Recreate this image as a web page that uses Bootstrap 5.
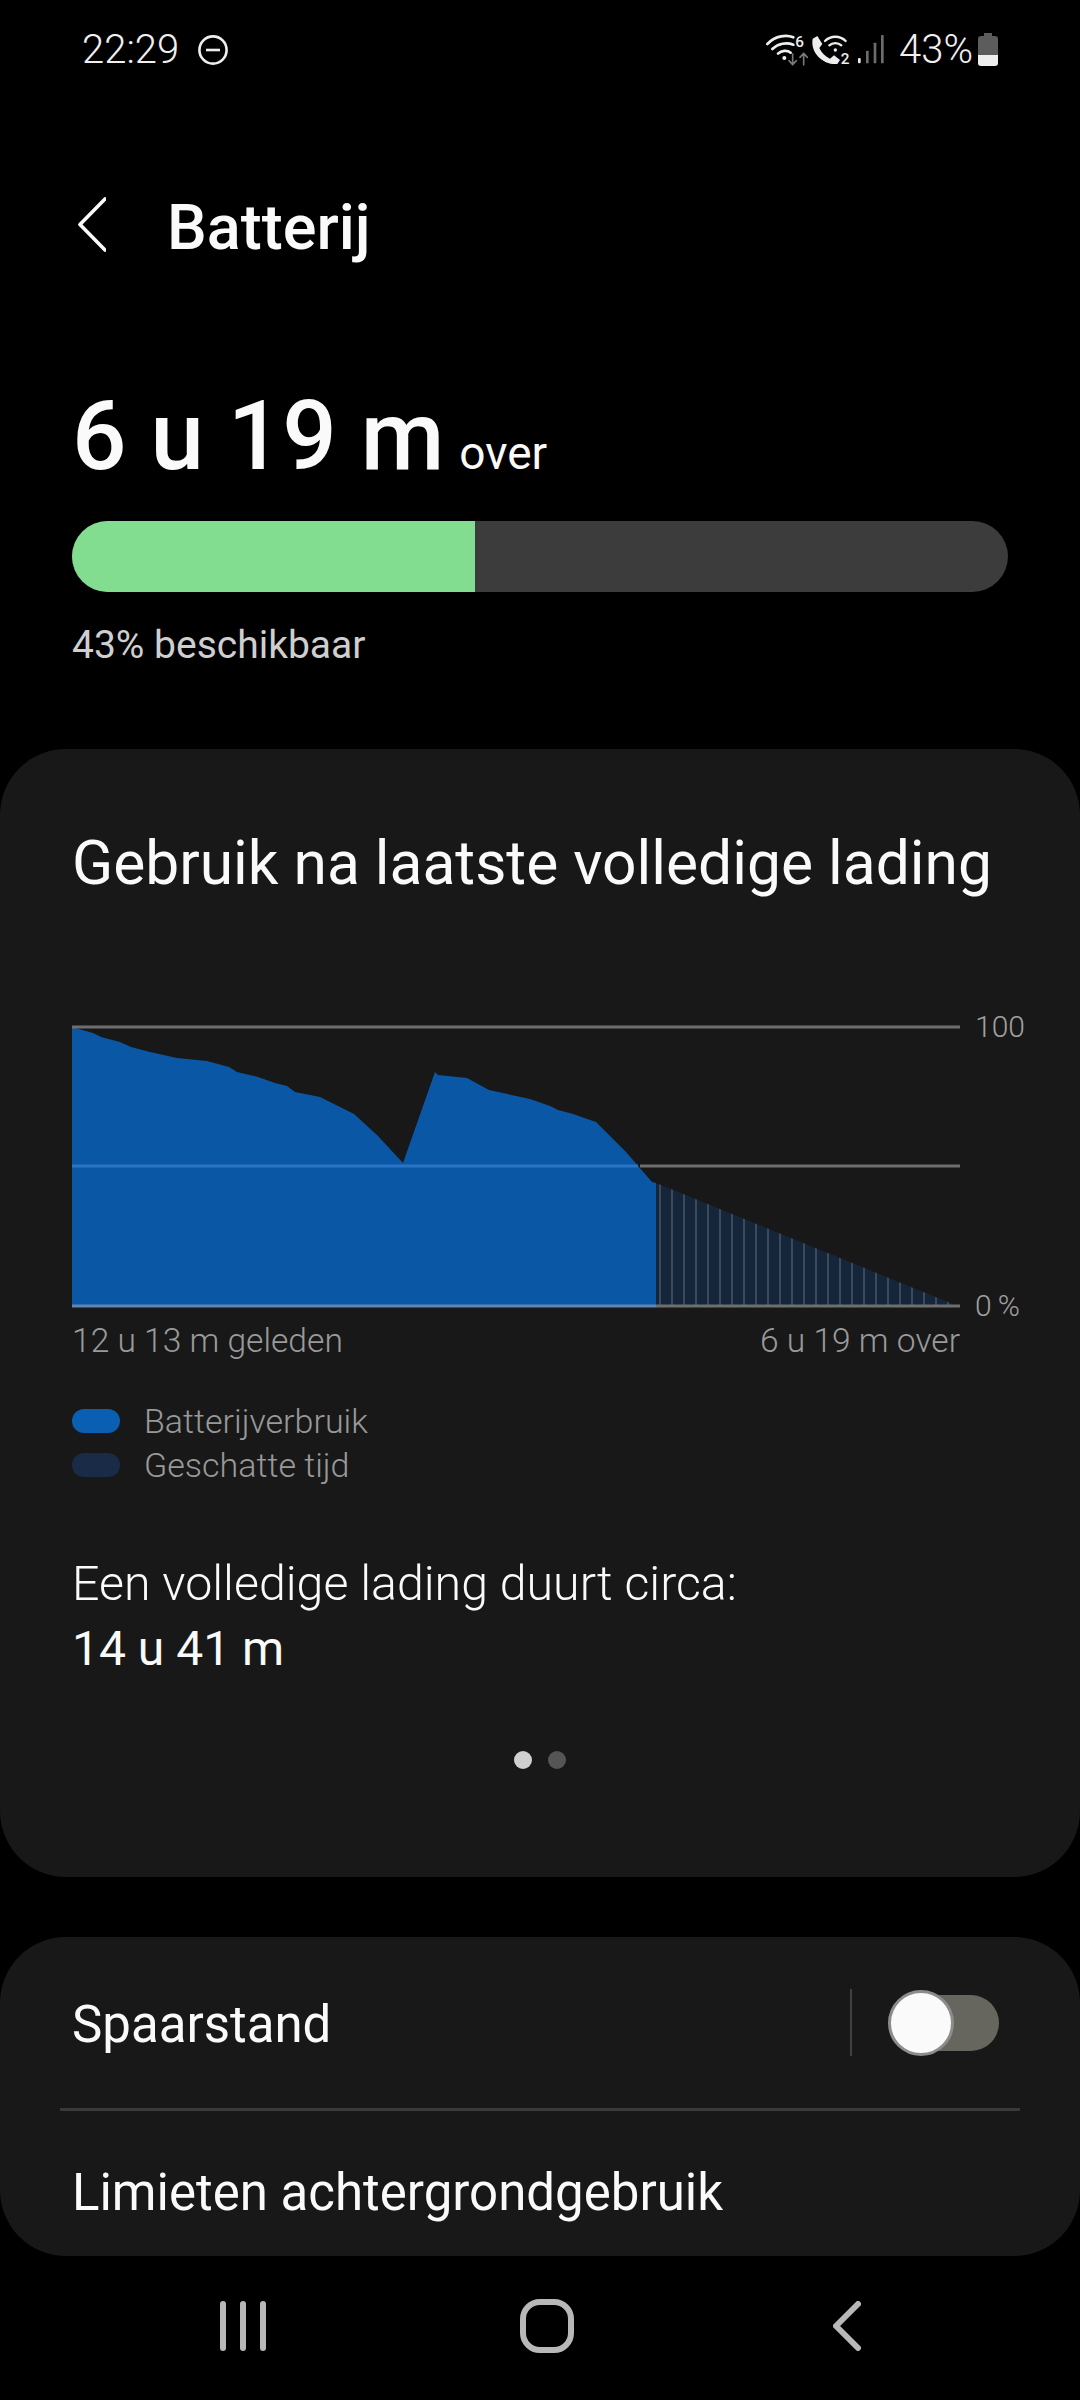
<!DOCTYPE html>
<html lang="nl">
<head>
<meta charset="utf-8">
<title>Batterij</title>
<link href="https://cdn.jsdelivr.net/npm/bootstrap@5.3.0/dist/css/bootstrap.min.css" rel="stylesheet">
<style>
html,body{background:#000;margin:0}
body{width:1080px;height:2400px;overflow:hidden;font-family:Roboto,"Liberation Sans",sans-serif;color:#fafafa}
.stat-bar{height:100px;padding:0 0 0 82px}
.stat-time{font-size:40px;font-weight:300;line-height:50px;color:#f0f0f0;width:115px}
.stat-pct{font-size:40px;font-weight:300;line-height:50px;color:#f0f0f0}
.app-bar{height:250px;padding:5px 0 0 78px}
.app-chevron{margin-top:-5px}
.app-title{font-size:63px;font-weight:500;line-height:70px;margin:0 0 0 61px;color:#fafafa}
.hero{padding:0 72px}
.hero-time{font-size:96px;font-weight:500;line-height:100px;margin-top:36px}
.hero-over{font-size:46px;font-weight:400;margin-left:15px}
.hero-bar{height:71px;margin-top:18px;background:#3c3c3c;border-radius:36px;overflow:hidden}
.hero-fill{width:403px;background:#82dd90}
.hero-note{font-size:39px;font-weight:400;line-height:50px;margin-top:28px;color:#cfcfcf}
.panel{background:#181818;border-radius:66px}
.panel-main{margin-top:79px;padding:80px 0 107px 72px;height:1128px}
.panel-title{font-size:60.500px;font-weight:400;line-height:70px;margin:0}
.chart-wrap{margin-top:126px}
.chart-svg{display:block;width:888px;height:283px}
.axis{margin-left:15px;height:283px;font-size:30px;font-weight:300;color:#a0a0a0}
.axis span{line-height:34px;margin:-15px 0}
.x-labels{width:888px;margin-top:13px;font-size:33.600px;font-weight:300;line-height:40px;color:#9a9a9a}
.legend{margin-top:38px;font-size:34px;font-weight:300;line-height:44px;color:#999}
.swatch{width:48px;height:24px;border-radius:12px;margin-right:24px}
.swatch-a{background:#0b5fb3}
.swatch-b{background:#1a2b47}
.full-time{margin-top:64px;font-size:48.300px;line-height:65px;font-weight:300}
.full-val{font-weight:400;font-size:48px;line-height:65px}
.pager{margin:70px 0 0 -72px}
.pager i{width:18px;height:18px;border-radius:50%;background:#555;display:block}
.pager i.on{background:#d0d0d0}
.panel-list{margin-top:60px;height:319px}
.row-a{height:171px;padding:0 81px 0 72px;font-size:51px;font-weight:400}
.row-a .lbl{flex:1 1 auto;padding-top:6px}
.sep{width:2px;height:67px;background:#404040;margin-right:36px}
.toggle{width:111px;height:66px;position:relative}
.toggle-track{position:absolute;left:5px;right:0;top:5px;height:56px;background:#66665e;border-radius:28px}
.toggle-knob{position:absolute;left:0;top:0;width:66px;height:66px;border-radius:50%;background:#fafafa;border:3px solid #8c8c8c}
.rule{height:3px;background:#3a3a3a;margin:0 60px}
.row-b{padding:52px 0 0 72px;font-size:51px;line-height:60px}
.nav-bottom{height:140px;padding:0 219px 0 220px}
.nav-home{margin-left:-6px}
</style>
</head>
<body>
<div class="stat-bar d-flex align-items-center">
  <span class="stat-time">22:29</span>
  <svg width="32" height="32" viewBox="0 0 32 32" fill="none" stroke="#eee" stroke-width="2.6"><circle cx="16" cy="16" r="13.6"/><path d="M9 16h14"/></svg>
  <svg class="ms-auto" width="135" height="40" viewBox="130 90 405 120" fill="none">
    <g stroke="#eee" stroke-width="8" stroke-linecap="round">
      <path d="M140 132C165 106 198 104 218 112"/><path d="M155 147C172 130 198 126 218 134"/><path d="M172 161C182 151 200 150 210 158"/>
    </g>
    <circle cx="191" cy="174" r="6" fill="#eee"/>
    <text x="224" y="142" font-family="Roboto,sans-serif" font-size="46" font-weight="500" fill="#eee">6</text>
    <g stroke="#777" stroke-width="5" stroke-linecap="round" stroke-linejoin="round"><path d="M216 162v32M205 182l11 12 11-12"/><path d="M249 194v-34M238 172l11-12 11 12"/></g>
    <path d="M276 116L290 108L305 132L296 144C302 158 314 170 328 176L340 166L358 180L350 192C310 196 268 160 276 116Z" fill="#eee"/>
    <g stroke="#eee" stroke-width="7" stroke-linecap="round"><path d="M313 123C330 106 358 106 375 123"/><path d="M326 136C336 127 352 127 362 136"/></g>
    <circle cx="344" cy="150" r="5" fill="#eee"/>
    <text x="360" y="193" font-family="Roboto,sans-serif" font-size="46" font-weight="500" fill="#eee">2</text>
    <rect x="412" y="174" width="8" height="16" rx="3" fill="#eee"/>
    <rect x="436" y="152" width="8" height="38" rx="2" fill="#6c6c6c"/>
    <rect x="459" y="128" width="8" height="62" rx="2" fill="#6c6c6c"/>
    <rect x="481" y="105" width="8" height="85" rx="2" fill="#6c6c6c"/>
  </svg>
  <span class="stat-pct">43%</span>
  <svg class="ms-1" width="22" height="34" viewBox="0 0 22 34" style="margin-right:81px">
    <path d="M7 0h8v3h3a3 3 0 0 1 3 3v19H1V6a3 3 0 0 1 3-3h3z" fill="#5c5c5c"/>
    <path d="M1 22h20v8a3 3 0 0 1-3 3H4a3 3 0 0 1-3-3z" fill="#eee"/>
  </svg>
</div>

<div class="app-bar d-flex align-items-center">
  <svg class="app-chevron" width="28" height="56" viewBox="0 0 28 56" fill="none" stroke="#fafafa" stroke-width="3.6" stroke-linecap="round" stroke-linejoin="round"><path d="M27 2L2 27.500L27 53"/></svg>
  <h1 class="app-title">Batterij</h1>
</div>

<section class="hero">
  <div class="hero-time">6 u 19 m<span class="hero-over">over</span></div>
  <div class="hero-bar d-flex"><div class="hero-fill"></div></div>
  <div class="hero-note">43% beschikbaar</div>
</section>

<section class="panel panel-main">
  <h2 class="panel-title">Gebruik na laatste volledige lading</h2>
  <div class="chart-wrap d-flex">
    <svg class="chart-svg" viewBox="72 1025 888 283">
      <defs>
        <pattern id="stripes" x="659" y="0" width="12" height="10" patternUnits="userSpaceOnUse">
          <rect width="12" height="10" fill="#16263a"/><rect width="2" height="10" fill="#3c4a5b"/>
        </pattern>
      </defs>
      <path d="M656 1183L960 1307H656Z" fill="url(#stripes)"/>
      <path d="M72 1027L93 1033L101 1037L120 1042L131 1047L150 1052L177 1058L207 1061L229 1067L237 1072L258 1077L275 1083L287 1086L295 1092L320 1097L338 1106L354 1114L377 1135L403 1163L435 1072L438 1075L467 1078L489 1090L530 1099L550 1106L558 1110L573 1114L596 1122L626 1152L652 1182L656 1183V1307H72Z" fill="#0a58a5"/>
      <path d="M72 1027H960M640 1166H960M656 1306H960" stroke="#6e6e6e" stroke-width="3"/>
      <path d="M72 1166H638" stroke="#2b73c4" stroke-width="3"/>
      <path d="M72 1306H656" stroke="#5f86b0" stroke-width="3"/>
    </svg>
    <div class="axis d-flex flex-column justify-content-between"><span>100</span><span>0&#8201;%</span></div>
  </div>
  <div class="x-labels d-flex justify-content-between"><span>12 u 13 m geleden</span><span>6 u 19 m over</span></div>
  <div class="legend">
    <div class="d-flex align-items-center"><span class="swatch swatch-a"></span>Batterijverbruik</div>
    <div class="d-flex align-items-center"><span class="swatch swatch-b"></span>Geschatte tijd</div>
  </div>
  <div class="full-time">Een volledige lading duurt circa:</div>
  <div class="full-val">14 u 41 m</div>
  <div class="pager d-flex justify-content-center gap-3"><i class="on"></i><i></i></div>
</section>

<section class="panel panel-list">
  <div class="row-a d-flex align-items-center">
    <span class="lbl">Spaarstand</span>
    <span class="sep"></span>
    <span class="toggle"><span class="toggle-track"></span><span class="toggle-knob"></span></span>
  </div>
  <div class="rule"></div>
  <div class="row-b">Limieten achtergrondgebruik</div>
</section>

<div class="nav-bottom d-flex justify-content-between align-items-center">
  <svg width="46" height="50" viewBox="0 0 46 50" stroke="#b8b8b8" stroke-width="6" stroke-linecap="round"><path d="M3 3v44M23 3v44M43 3v44"/></svg>
  <svg class="nav-home" width="54" height="54" viewBox="0 0 54 54" fill="none" stroke="#b8b8b8" stroke-width="6"><rect x="3" y="3" width="48" height="48" rx="17"/></svg>
  <svg width="28" height="50" viewBox="0 0 28 50" fill="none" stroke="#b8b8b8" stroke-width="6" stroke-linecap="round" stroke-linejoin="round"><path d="M25 3L3 25L25 47"/></svg>
</div>
<script src="https://cdn.jsdelivr.net/npm/bootstrap@5.3.0/dist/js/bootstrap.bundle.min.js"></script>
</body>
</html>
